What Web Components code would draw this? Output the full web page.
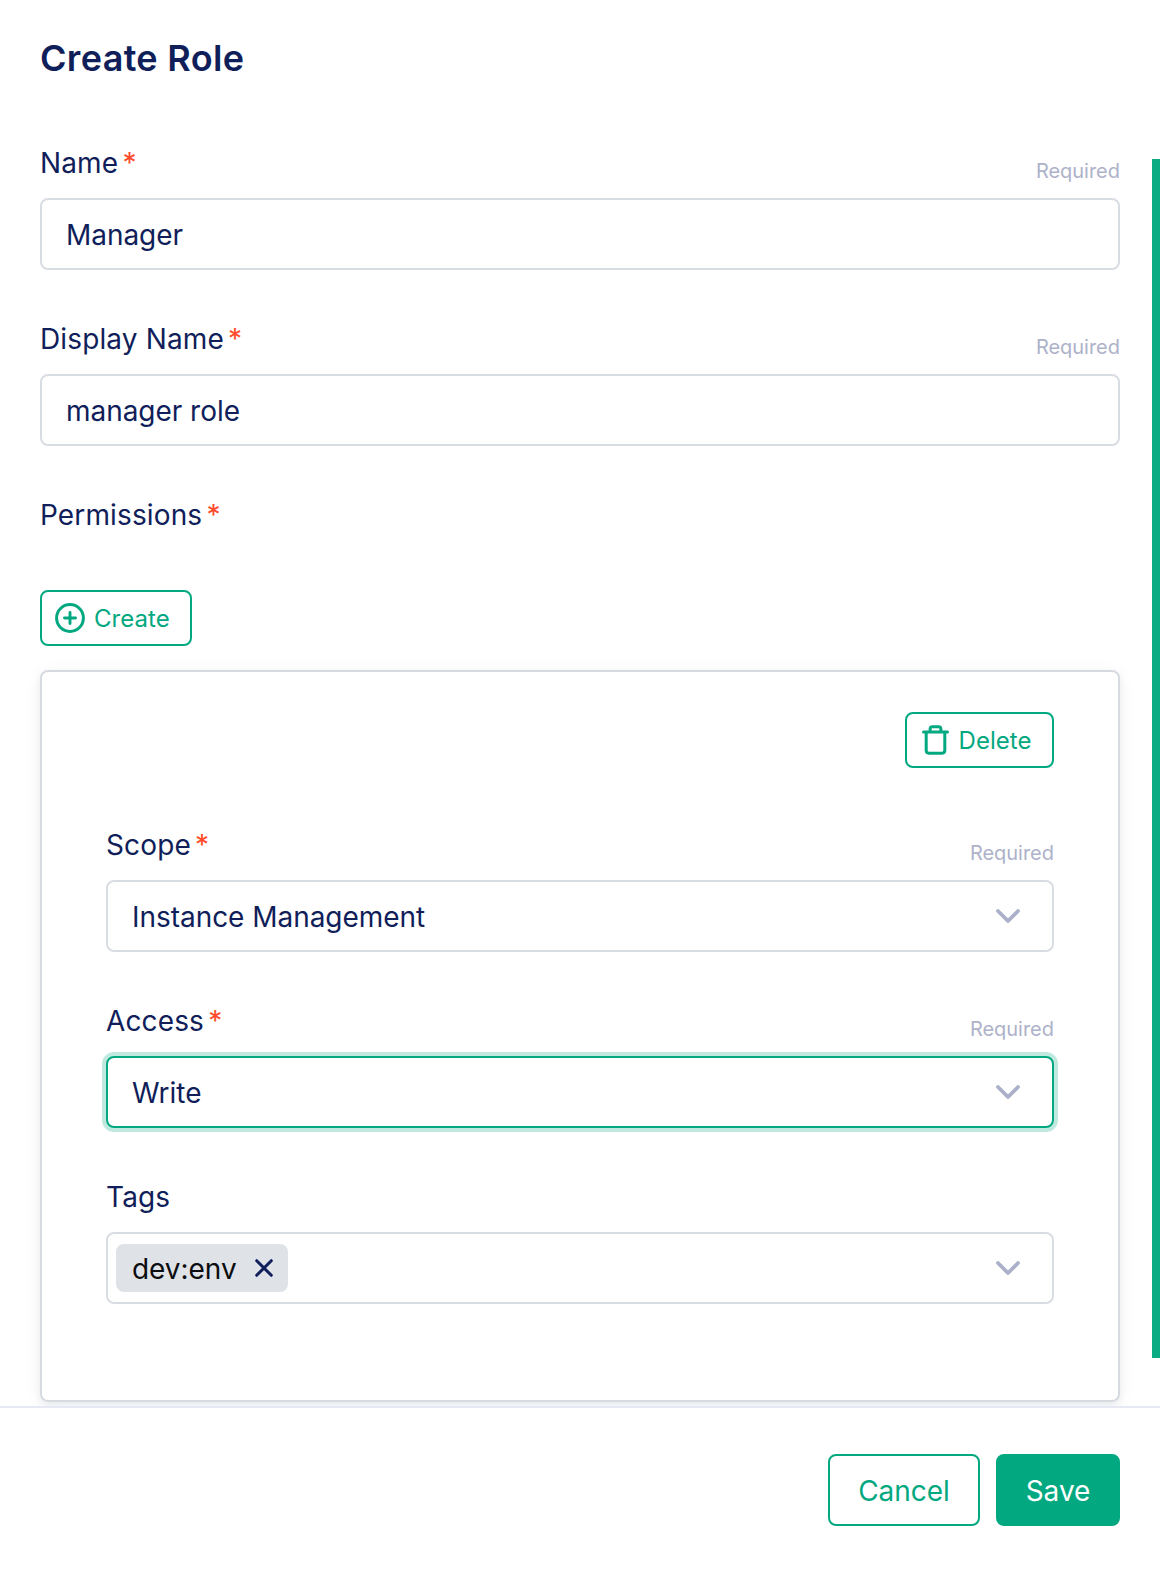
<!DOCTYPE html>
<html lang="en">
<head>
<meta charset="utf-8">
<title>Create Role</title>
<style>
  html, body { margin: 0; background: #fff; }
  body { font-family: Inter, "Liberation Sans", sans-serif; color: #101e5a; }
</style>
</head>
<body>
<role-panel>
  <span slot="title">Create Role</span>
  <form-field label="Name" required hint="Required"><text-box>Manager</text-box></form-field>
  <form-field label="Display Name" required hint="Required"><text-box>manager role</text-box></form-field>
  <form-field label="Permissions" required></form-field>
  <icon-button icon="plus">Create</icon-button>
  <permission-card>
    <icon-button slot="action" icon="trash">Delete</icon-button>
    <form-field label="Scope" required hint="Required"><text-box select>Instance Management</text-box></form-field>
    <form-field label="Access" required hint="Required"><text-box select focused>Write</text-box></form-field>
    <form-field label="Tags"><text-box select tags><tag-chip>dev:env</tag-chip></text-box></form-field>
  </permission-card>
  <action-button slot="footer">Cancel</action-button>
  <action-button slot="footer" primary>Save</action-button>
</role-panel>
<script>
const define = (name, render) => customElements.define(name, class extends HTMLElement {
  constructor() {
    super();
    this.attachShadow({ mode: 'open' });
  }
  connectedCallback() {
    this.shadowRoot.innerHTML = render(this);
  }
});

define('role-panel', () => `
<style>
  :host { display: flex; flex-direction: column; position: relative; width: 1160px; height: 1574px; overflow: hidden; }
  header { height: 144px; box-sizing: border-box; padding: 34px 40px 0; flex: none; }
  h1 { margin: 0; font-size: 36px; line-height: 48px; font-weight: 600; letter-spacing: 0.33px; }
  main { flex: none; height: 1262px; overflow: hidden; box-sizing: border-box; padding: 0 40px; display: flex; flex-direction: column; align-items: stretch; }
  footer { flex: 1; border-top: 2px solid #e6e8f3; padding: 46px 40px 0; display: flex; justify-content: flex-end; align-items: flex-start; gap: 16px; }
  .bar { position: absolute; right: 0; top: 159px; width: 8px; height: 1199px; background: #0bab83; }
</style>
<header><h1><slot name="title"></slot></h1></header>
<main><slot></slot></main>
<footer><slot name="footer"></slot></footer>
<div class="bar"></div>`);

define('form-field', el => `
<style>
  :host { display: block; margin-bottom: 50px; }
  :host([label="Permissions"]) { margin-bottom: 40px; }
  .row { display: flex; justify-content: space-between; align-items: flex-start; height: 54px; }
  .label { font-size: 28px; line-height: 38px; letter-spacing: 0.13px; }
  .star { color: #ff4b2b; margin-left: 4.2px; letter-spacing: 0; }
  .hint { font-size: 20px; line-height: 24px; margin-top: 15px; color: #adb2c9; letter-spacing: -0.02px; }
</style>
<div class="row">
  <div class="label">${el.getAttribute('label')}${el.hasAttribute('required') ? '<span class="star">*</span>' : ''}</div>
  ${el.hasAttribute('hint') ? `<div class="hint">${el.getAttribute('hint')}</div>` : ''}
</div>
<slot></slot>`);

define('text-box', el => `
<style>
  :host { display: flex; align-items: center; justify-content: space-between; box-sizing: border-box; height: 72px; border: 2px solid #d8dce3; border-radius: 8px; padding: 2px 32px 0 24px; font-size: 28px; line-height: 36px; letter-spacing: -0.04px; background: #fff; }
  :host([tags]) { padding: 0 32px 0 8px; }
  :host([focused]) { border-color: #02a880; box-shadow: 0 0 0 4px #bfe9df; }
  svg { display: block; }
  :host(:not([tags])) svg { margin-top: -2px; }
</style>
<div><slot></slot></div>
${el.hasAttribute('select') ? '<svg width="24" height="16" viewBox="0 0 24 16" fill="none" stroke="#abb0c8" stroke-width="3.8" stroke-linecap="round" stroke-linejoin="round"><path d="M2 3 L12 13 L22 3"/></svg>' : ''}`);

define('tag-chip', () => `
<style>
  :host { display: flex; align-items: center; justify-content: space-between; height: 48px; box-sizing: border-box; width: 172px; padding: 2px 15px 0 16px; border-radius: 8px; background: #dfe2e7; color: #0c0d10; }
  svg { display: block; flex: none; margin-top: -2px; }
</style>
<span><slot></slot></span>
<svg width="18" height="18" viewBox="0 0 18 18" fill="none" stroke="#101e5a" stroke-width="3" stroke-linecap="round"><path d="M1.7 1.7 L16.3 16.3 M16.3 1.7 L1.7 16.3"/></svg>`);

define('permission-card', () => `
<style>
  :host { display: block; flex: none; box-sizing: border-box; height: 732px; margin-top: 24px; border: 2px solid #d7dbe1; border-radius: 8px; padding: 40px 64px 0; box-shadow: 0 4px 8px rgba(16,24,64,.08), 0 2px 24px rgba(16,24,64,.03); background: #fff; }
  .top { display: flex; justify-content: flex-end; margin-bottom: 58px; }
</style>
<div class="top"><slot name="action"></slot></div>
<slot></slot>`);

const glyphs = {
  plus: '<svg width="30" height="30" viewBox="0 0 30 30" fill="none" stroke="#02a880" stroke-linecap="round"><circle cx="15" cy="15" r="13.4" stroke-width="3"/><path stroke-width="2.9" d="M15 9.5v11M9.5 15h11"/></svg>',
  trash: '<svg width="27" height="30" viewBox="0 0 27 30" fill="none" stroke="#02a880" stroke-width="3" stroke-linecap="round" stroke-linejoin="round"><path d="M1.5 7h24M8.1 7V4Q8.1 1.7 10.4 1.7h6.2Q18.9 1.7 18.9 4V7M4.2 7v18.6q0 2.6 2.6 2.6h13.4q2.6 0 2.6-2.6V7"/></svg>'
};

define('icon-button', el => `
<style>
  :host { display: flex; align-items: center; align-self: flex-start; box-sizing: border-box; width: 152px; height: 56px; flex: none; padding-left: 13px; gap: 9px; border: 2px solid #02a880; border-radius: 8px; color: #02a880; font-size: 24px; line-height: 32px; letter-spacing: 0.06px; }
  :host([icon="trash"]) { width: 149px; padding-left: 14.5px; gap: 10px; }
  svg { display: block; flex: none; }
  span { padding-top: 2px; }
</style>
${glyphs[el.getAttribute('icon')]}<span><slot></slot></span>`);

define('action-button', () => `
<style>
  :host { display: flex; align-items: center; justify-content: center; box-sizing: border-box; width: 152px; height: 72px; padding-top: 2px; border: 2px solid #02a880; border-radius: 8px; color: #02a880; font-size: 28px; line-height: 36px; letter-spacing: -0.02px; }
  :host([primary]) { width: 124px; background: #02a880; color: #fff; }
</style>
<slot></slot>`);
</script>
</body>
</html>
